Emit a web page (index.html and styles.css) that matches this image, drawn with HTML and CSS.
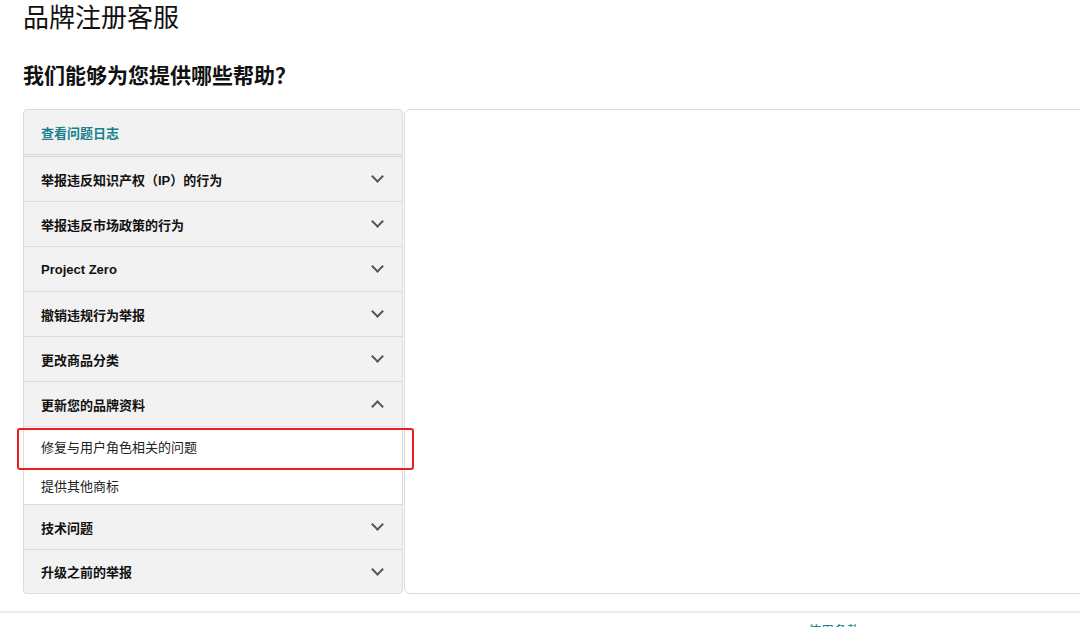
FILE: index.html
```html
<!DOCTYPE html>
<html>
	<head>
		<meta charset="utf-8">
		<title>品牌注册客服</title>
		<link rel="stylesheet" href="styles.css">
	</head>
	<body>
		<div class="page">
			<h1 class="title">品牌注册客服</h1>
			<h2 class="subtitle">我们能够为您提供哪些帮助？</h2>
			<div class="main">
				<div class="side">
					<div class="row log">查看问题日志</div>
					<div class="row">举报违反知识产权（IP）的行为<i class="arrow"></i></div>
					<div class="row">举报违反市场政策的行为<i class="arrow"></i></div>
					<div class="row">Project Zero<i class="arrow"></i></div>
					<div class="row">撤销违规行为举报<i class="arrow"></i></div>
					<div class="row">更改商品分类<i class="arrow"></i></div>
					<div class="row open">更新您的品牌资料<i class="arrow up"></i></div>
					<div class="sub mark">修复与用户角色相关的问题</div>
					<div class="sub last">提供其他商标</div>
					<div class="row">技术问题<i class="arrow"></i></div>
					<div class="row end">升级之前的举报<i class="arrow"></i></div>
				</div>
				<div class="content"></div>
			</div>
		</div>
		<div class="footer">
			<a href="#">使用条款</a>
		</div>
	</body>
</html>
```

FILE: styles.css
```css
*{
	margin: 0;
	padding: 0;
	box-sizing: border-box;
}
html, body{
	overflow: hidden;
}
body{
	width: 1080px;
	height: 627px;
	background: #fff;
	color: #111;
	font-family: "Liberation Sans", "Noto Sans CJK SC", sans-serif;
}
.page{
	padding-left: 23px;
}
.title{
	font-size: 26px;
	font-weight: normal;
	line-height: 36px;
	color: #111;
}
.subtitle{
	margin-top: 26px;
	font-size: 21px;
	font-weight: bold;
	line-height: 28px;
	color: #111;
}
.main{
	display: flex;
	margin-top: 19px;
	height: 485px;
}
.side{
	position: relative;
	width: 380px;
	background: #f2f2f2;
	border: 1px solid #dcdcdc;
	border-radius: 4px;
}
.content{
	flex: 1;
	margin-left: 1px;
	margin-right: -10px;
	border: 1px solid #dcdcdc;
	border-radius: 6px;
	background: #fff;
}
.row{
	display: flex;
	align-items: center;
	justify-content: space-between;
	height: 45px;
	padding: 0 16px 0 17px;
	border-bottom: 1px solid #dcdcdc;
	font-size: 13px;
	font-weight: bold;
	color: #111;
}
.row.log{
	height: 47px;
	color: #1b7f8e;
	border-bottom: 3px double #d8d8d8;
}
.row.end{
	border-bottom: none;
	height: 43px;
}
.row.open{
	border-bottom: 1px solid #e3e3e3;
}
.arrow{
	display: block;
	width: 9px;
	height: 9px;
	border-right: 2px solid #555;
	border-bottom: 2px solid #555;
	transform: rotate(45deg);
	margin: -5px 4px 0 0;
}
.arrow.up{
	transform: rotate(-135deg);
	margin: 5px 4px 0 0;
}
.sub{
	display: flex;
	align-items: center;
	height: 39px;
	padding-left: 17px;
	background: #fff;
	font-size: 13px;
	color: #222;
}
.sub.last{
	border-bottom: 1px solid #dcdcdc;
}
.mark{
	position: relative;
}
.mark:after{
	content: "";
	position: absolute;
	left: -7px;
	top: 1px;
	width: 393px;
	height: 38px;
	border: 2px solid #ee1c1c;
	border-radius: 3px;
}
.footer{
	margin-top: 17px;
	border-top: 2px solid #ebebeb;
	padding: 7px 0 0 808px;
	font-size: 13px;
}
.footer a{
	color: #1b7f8e;
	text-decoration: none;
}
```
